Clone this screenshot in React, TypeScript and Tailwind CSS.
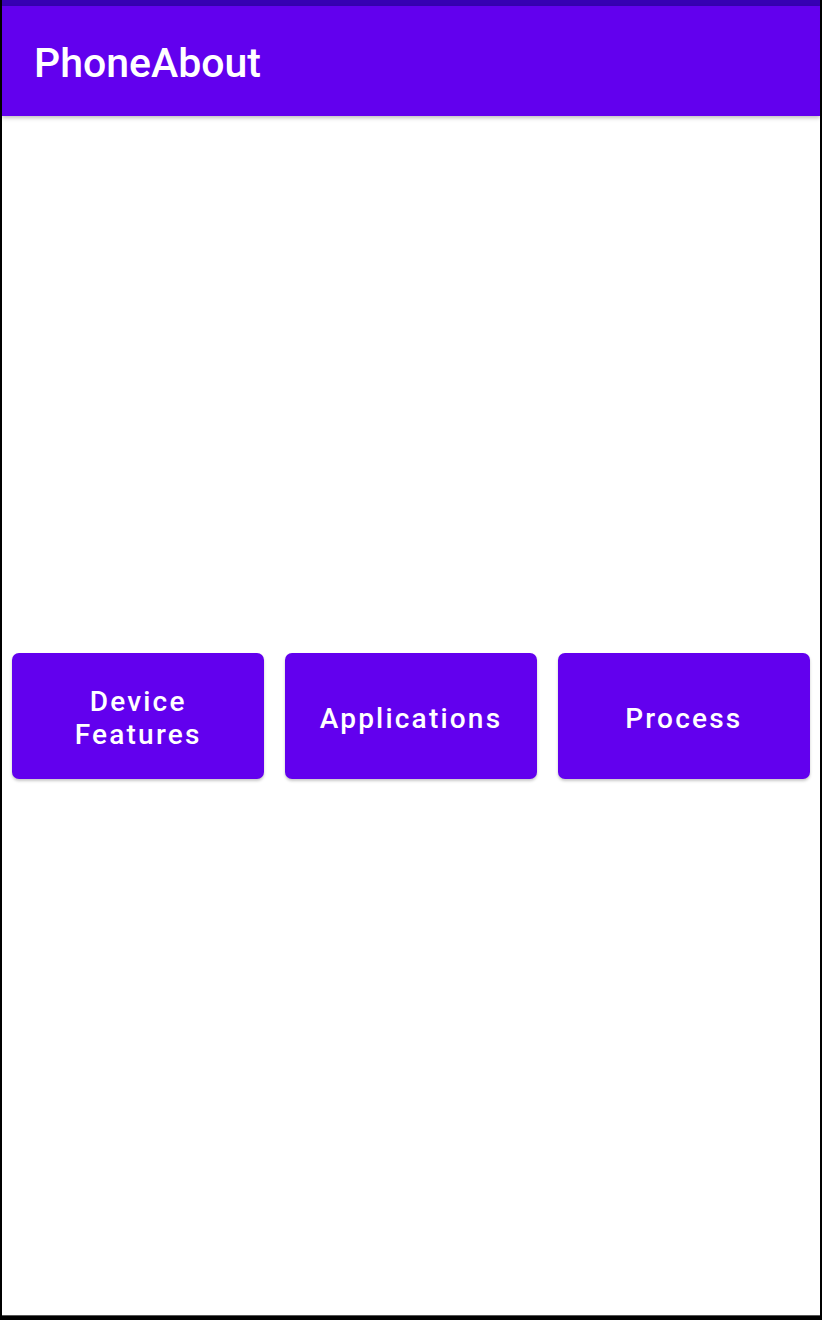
import React from "react";

const labels: React.ReactNode[] = [
  <>Device<br />Features</>,
  "Applications",
  "Process",
];

export default function App() {
  return (
    <div
      className="w-[822px] h-[1320px] bg-black flex flex-col pl-[2px] pr-[2px] pb-[4px]"
      style={{ fontFamily: "Roboto, 'Noto Sans', sans-serif" }}
    >
      <div className="flex-1 flex flex-col bg-white border-b border-[#555]">
        <div className="h-[6px] bg-[#3700B3]" />
        <div className="h-[110px] bg-[#6200EE] flex items-center pl-[32px] pt-[4px] shadow-[0_2px_4px_rgba(0,0,0,0.25)] relative z-10">
          <span className="text-white text-[41px] font-medium leading-none">PhoneAbout</span>
        </div>
        <div className="flex-1 flex items-center pl-[10px] pr-[10px] gap-[20.5px]">
          {labels.map((l, i) => (
            <button
              key={i}
              className="flex-1 h-[126px] pt-[5px] rounded-[7px] bg-[#6200EE] text-white text-[28px] font-medium leading-[33px] tracking-[2.2px] shadow-[0_2px_3px_rgba(0,0,0,0.22)] flex items-center justify-center text-center"
            >
              <span>{l}</span>
            </button>
          ))}
        </div>
      </div>
    </div>
  );
}
